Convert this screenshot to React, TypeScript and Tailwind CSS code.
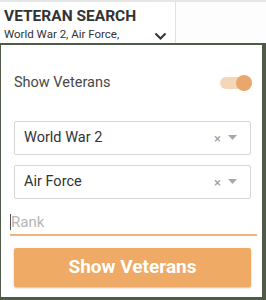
import { useState } from "react";

function SelectBox({ value }: { value: string }) {
  return (
    <div className="flex h-[34px] items-center rounded-[2px] border border-[#d6d6d6] bg-white pl-[9px] pr-[13px]">
      <span className="flex-1 text-[14.5px] text-[#333]">{value}</span>
      <span className="mr-[7px] text-[13px] leading-none text-[#999]">×</span>
      <svg width="9" height="6" viewBox="0 0 9 6" aria-hidden>
        <path d="M0 0h9L4.5 5z" fill="#a8a8a8" />
      </svg>
    </div>
  );
}

export default function App() {
  const [on, setOn] = useState(true);

  return (
    <div
      className="flex h-[300px] w-[266px] flex-col overflow-hidden bg-[#4f5a48]"
      style={{ fontFamily: "Roboto, 'Liberation Sans', sans-serif" }}
    >
      <header className="flex h-[43px] border-t-2 border-[#e6e6e6] bg-white">
        <div className="flex w-[176px] flex-col border-r border-[#e2e2e2] pl-[4px] pr-[8px] pt-[4px]">
          <h1 className="text-[15.5px] font-bold leading-[20px] text-[#333]">VETERAN SEARCH</h1>
          <div className="flex items-center justify-between">
            <span className="text-[11.5px] leading-[16px] text-[#333]">World War 2, Air Force,</span>
            <svg width="13" height="8" viewBox="0 0 13 8" aria-hidden className="mt-[3px]">
              <path d="M1.5 1.5l5 5 5-5" fill="none" stroke="#333" strokeWidth="2" />
            </svg>
          </div>
        </div>
        <div className="flex-1 bg-[#fdfdfd]" />
      </header>

      <div className="mb-[3px] ml-px mr-[4px] mt-[2px] flex flex-1 flex-col bg-white pl-[13px] pr-[11px] pt-[28px]">
        <div className="flex h-[20px] items-center justify-between">
          <span className="text-[14.5px] text-[#484848]">Show Veterans</span>
          <button
            type="button"
            onClick={() => setOn(!on)}
            className="relative mr-[1px] h-[12px] w-[30px] rounded-full bg-[#f6d6b9]"
          >
            <span className="absolute right-[-2px] top-[-2px] size-[16px] rounded-full bg-[#e9a76c]" />
          </button>
        </div>

        <div className="mt-[28px] flex flex-col gap-[10px]">
          <SelectBox value="World War 2" />
          <SelectBox value="Air Force" />
        </div>

        <div className="-ml-[4px] -mr-[6px] mt-[11px] flex h-[26px] items-center border-b-2 border-[#f0b47a]">
          <span className="h-[16px] w-px bg-[#555]" />
          <span className="text-[15px] text-[#b5b5b5]">Rank</span>
        </div>

        <button
          type="button"
          className="mt-[12px] h-[39px] rounded-[2px] bg-[#efaa66] text-[19px] font-bold text-white shadow-[0_1px_2px_rgba(0,0,0,0.25)]"
        >
          Show Veterans
        </button>
      </div>
    </div>
  );
}
